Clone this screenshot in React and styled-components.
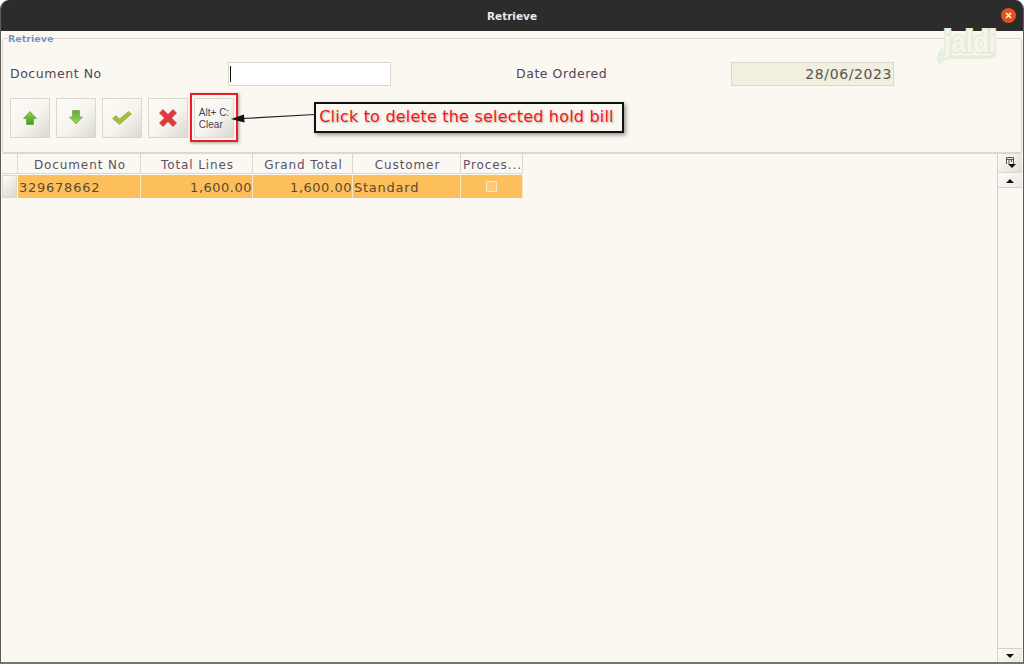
import React from 'react'
import styled, { createGlobalStyle } from 'styled-components'

const Global = createGlobalStyle`
  html, body {
    margin: 0;
    padding: 0;
    background: #fff;
  }
  body {
    font-family: "DejaVu Sans", sans-serif;
    color: #4a4150;
  }
`
const Window = styled.div`
  position: relative;
  width: 1024px;
  height: 664px;
  display: flex;
  flex-direction: column;
  overflow: hidden;
  background: #fbf8f1;
  border-radius: 9px 9px 0 0;
  box-sizing: border-box;
  border-left: 1px solid #5c5c58;
  border-right: 1px solid #5c5c58;
  border-bottom: 2px solid #77756f;
`
const TitleBar = styled.header`
  height: 31px;
  flex: none;
  margin: 0 -1px;
  background: #2c2c2c;
  display: flex;
  align-items: center;
  justify-content: center;
  position: relative;
  color: #e8e8e8;
  font: bold 10.5px "DejaVu Sans", sans-serif;
`
const CloseButton = styled.span`
  position: absolute;
  right: 8px;
  top: 8px;
  width: 15px;
  height: 15px;
  border-radius: 50%;
  background: #e4501e;
  display: flex;
  align-items: center;
  justify-content: center;
`
const Content = styled.main`
  flex: 1;
  display: flex;
  flex-direction: column;
  min-height: 0;
  padding: 2px 1px 0 1px;
`
const Group = styled.fieldset`
  margin: 0;
  padding: 0 0 13px 7px;
  height: 120px;
  flex: none;
  box-sizing: border-box;
  border: 1px solid #ddd8ca;
  border-radius: 2px;
  min-width: 0;
`
const Legend = styled.legend`
  margin-left: -2px;
  padding: 0;
  font-size: 9.5px;
  font-weight: bold;
  line-height: 11px;
  color: #7595c6;
`
const FormRow = styled.div`
  display: grid;
  grid-template-columns: 218px 163px 125px 215px 163px;
  align-items: center;
  height: 24px;
  margin-top: 17px;
`
const Label = styled.label`
  font-size: 12.5px;
  letter-spacing: 0.55px;
  line-height: 26px;
  color: #4f4658;
`
const Input = styled.div`
  height: 24px;
  box-sizing: border-box;
  background: ${p => (p.$readonly ? '#f0efe0' : '#fff')};
  border: 1px solid #ddd8ca;
  font-size: 14px;
  letter-spacing: 0.6px;
  line-height: 22px;
  text-align: right;
  padding: 0 1px;
  color: #5a5450;
  position: relative;
`
const Caret = styled.span`
  position: absolute;
  left: 1px;
  top: 3px;
  width: 1px;
  height: 16px;
  background: #111;
`
const Toolbar = styled.div`
  display: flex;
  gap: 6px;
  margin-top: 13px;
`
const ToolButton = styled.button`
  width: 40px;
  height: 40px;
  padding: ${p => (p.$text ? '2px 0 0' : '0')};
  box-sizing: border-box;
  border: 1px solid #dcd7c8;
  background: linear-gradient(135deg, #fdfcf9 0%, #f6f4ee 55%, #dad8d0 100%);
  display: flex;
  align-items: center;
  justify-content: center;
  font-family: "Liberation Sans", sans-serif;
  font-size: 10px;
  line-height: 12px;
  color: #4a3f55;
  text-align: left;
`
const TableArea = styled.section`
  flex: 1;
  min-height: 0;
  display: flex;
  border-top: 1px solid #ddd8ca;
`
const Table = styled.div`
  flex: 1;
  min-width: 0;
`
const Row = styled.div`
  display: grid;
  grid-template-columns: 16px 123px 112px 100px 108px 62px;
  width: 521px;
`
const HeadCell = styled.div`
  height: 20px;
  box-sizing: border-box;
  border-right: 1px solid #ddd8ca;
  border-bottom: 1px solid #ddd8ca;
  padding-left: 2px;
  font-size: 12px;
  letter-spacing: 0.9px;
  line-height: 22px;
  text-align: center;
  color: #5a5168;
  white-space: nowrap;
  overflow: hidden;
`
const RowHead = styled.div`
  height: 23px;
  margin: 1px 1px 0 0;
  box-sizing: border-box;
  border: 1px solid #ddd8ca;
  background: linear-gradient(135deg, #fdfcf9, #d9d7cf);
`
const Cell = styled.div`
  height: 23px;
  margin-top: 1px;
  box-sizing: border-box;
  background: #fdbf5b;
  border-right: 1px solid #fbe6c2;
  font-size: 13px;
  letter-spacing: ${p => (p.$right ? '0.5px' : '0.75px')};
  line-height: 25px;
  padding: 0 ${p => (p.$right ? '0' : '1px')};
  text-align: ${p => (p.$right ? 'right' : 'left')};
  color: #5c4a30;
  white-space: nowrap;
  display: ${p => (p.$center ? 'flex' : 'block')};
  align-items: center;
  justify-content: center;
`
const Check = styled.span`
  width: 9px;
  height: 9px;
  background: #fdc878;
  border: 1px solid #f3e6cf;
`
const ScrollBar = styled.aside`
  width: 24px;
  flex: none;
  display: flex;
  flex-direction: column;
  border-left: 1px solid #d6d1c3;
`
const ColumnMenu = styled.div`
  height: 19px;
  box-sizing: border-box;
  display: flex;
  align-items: center;
  justify-content: center;
  background: linear-gradient(135deg, #fdfcf9, #e0ded6);
  border-bottom: 1px solid #ddd8ca;
`
const ScrollButton = styled.div`
  height: 14px;
  margin-top: ${p => (p.$top ? '1px' : '0')};
  box-sizing: border-box;
  display: flex;
  align-items: center;
  justify-content: center;
  background: linear-gradient(135deg, #fdfcf9, #ebe9e2);
  border-top: ${p => (p.$top ? 'none' : '1px solid #d6d1c3')};
  border-bottom: ${p => (p.$top ? '1px solid #d6d1c3' : 'none')};
`
const Track = styled.div`
  flex: 1;
`
const Arrow = styled.span`
  width: 0;
  height: 0;
  border-left: 4px solid transparent;
  border-right: 4px solid transparent;
  ${p => (p.$up ? 'border-bottom: 4px solid #111;' : 'border-top: 4px solid #111;')}
`
const Highlight = styled.div`
  position: absolute;
  left: 189px;
  top: 93px;
  width: 48px;
  height: 49px;
  box-sizing: border-box;
  border: 2px solid #ee1c25;
  box-shadow: 1px 1px 3px rgba(0, 0, 0, 0.35);
`
const Callout = styled.div`
  position: absolute;
  left: 313px;
  top: 102px;
  width: 310px;
  height: 31px;
  box-sizing: border-box;
  border: 2px solid #111;
  padding: 0 5px 2px 0;
  background: #fbf8f1;
  box-shadow: 2px 2px 4px rgba(0, 0, 0, 0.4);
  display: flex;
  align-items: center;
  justify-content: center;
  color: #f5141c;
  font-size: 16px;
  letter-spacing: 0.2px;
  text-shadow: 1px 1px 2px rgba(0, 0, 0, 0.3);
  white-space: nowrap;
`
const Pointer = styled.svg`
  position: absolute;
  left: 228px;
  top: 108px;
`
const Watermark = styled.svg`
  position: absolute;
  left: 932px;
  top: 22px;
  pointer-events: none;
`
const LogoText = styled.text`
  font: bold 30px "Liberation Sans", sans-serif;
  fill: #f6f6ea;
  stroke: #e6eddc;
  stroke-width: 4px;
  paint-order: stroke;
`

const columns = ['Document No', 'Total Lines', 'Grand Total', 'Customer', 'Proces...']

const UpIcon = () => (
  <svg width="18" height="18" viewBox="0 0 18 18">
    <defs>
      <linearGradient id="upGreen" x1="0" y1="0" x2="0" y2="1">
        <stop offset="0" stopColor="#8fd64a" />
        <stop offset="1" stopColor="#3f9a28" />
      </linearGradient>
    </defs>
    <path d="M9 2.5 L15.5 9.5 H12.5 V15.5 H5.5 V9.5 H2.5 Z" fill="url(#upGreen)" stroke="#4f9a33" strokeWidth="0.6" />
  </svg>
)
const DownIcon = () => (
  <svg width="18" height="18" viewBox="0 0 18 18">
    <defs>
      <linearGradient id="downGreen" x1="0" y1="0" x2="0" y2="1">
        <stop offset="0" stopColor="#5fa93a" />
        <stop offset="1" stopColor="#9ad95a" />
      </linearGradient>
    </defs>
    <path d="M5.5 1.5 H12.5 V8 H15.5 L9 15 L2.5 8 H5.5 Z" fill="url(#downGreen)" stroke="#5f9f3d" strokeWidth="0.6" />
  </svg>
)
const CheckIcon = () => (
  <svg width="22" height="18" viewBox="0 0 22 18">
    <path d="M1.5 9.5 L5 6.5 L8.5 10 L17.5 2.5 L20.5 5 L8.5 15.5 Z" fill="#a9bb3c" stroke="#8f9f34" strokeWidth="0.6" />
  </svg>
)
const CrossIcon = () => (
  <svg width="20" height="20" viewBox="0 0 20 20">
    <path d="M1.5 5 L5 1.5 L10 6.5 L15 1.5 L18.5 5 L13.5 10 L18.5 15 L15 18.5 L10 13.5 L5 18.5 L1.5 15 L6.5 10 Z" fill="#dc3a3e" stroke="#c22e33" strokeWidth="0.6" />
  </svg>
)
const ColumnIcon = () => (
  <svg width="11" height="12" viewBox="0 0 11 12">
    <path d="M1.5 0.5 H8.5 V7 M1.5 0.5 V7 M1.5 2.5 H8.5 M4 2.5 V7 M6.5 2.5 V5" fill="none" stroke="#555" strokeWidth="1" />
    <path d="M3 7 H11 L7 11 Z" fill="#111" />
  </svg>
)

export default function App() {
  return (
    <Window>
      <Global />
      <TitleBar>
        Retrieve
        <CloseButton>
          <svg width="7" height="7" viewBox="0 0 7 7">
            <path d="M1 1 L6 6 M6 1 L1 6" stroke="#fff" strokeWidth="1.5" />
          </svg>
        </CloseButton>
      </TitleBar>
      <Content>
        <Group>
          <Legend>Retrieve</Legend>
          <FormRow>
            <Label>Document No</Label>
            <Input>
              <Caret />
            </Input>
            <span />
            <Label>Date Ordered</Label>
            <Input $readonly>28/06/2023</Input>
          </FormRow>
          <Toolbar>
            <ToolButton>
              <UpIcon />
            </ToolButton>
            <ToolButton>
              <DownIcon />
            </ToolButton>
            <ToolButton>
              <CheckIcon />
            </ToolButton>
            <ToolButton>
              <CrossIcon />
            </ToolButton>
            <ToolButton $text>
              <span>
                Alt+ C:
                <br />
                Clear
              </span>
            </ToolButton>
          </Toolbar>
        </Group>
        <TableArea>
          <Table>
            <Row>
              <HeadCell />
              {columns.map(c => (
                <HeadCell key={c}>{c}</HeadCell>
              ))}
            </Row>
            <Row>
              <RowHead />
              <Cell>329678662</Cell>
              <Cell $right>1,600.00</Cell>
              <Cell $right>1,600.00</Cell>
              <Cell>Standard</Cell>
              <Cell $center>
                <Check />
              </Cell>
            </Row>
          </Table>
          <ScrollBar>
            <ColumnMenu>
              <ColumnIcon />
            </ColumnMenu>
            <ScrollButton $top>
              <Arrow $up />
            </ScrollButton>
            <Track />
            <ScrollButton>
              <Arrow />
            </ScrollButton>
          </ScrollBar>
        </TableArea>
      </Content>
      <Watermark width="72" height="44" viewBox="0 0 72 44">
        <path d="M62 28 Q62 35 55 35 H16 Q10 35 8 39 Q5 42 6 34 L9 28" fill="none" stroke="#e6eddc" strokeWidth="3.5" strokeLinecap="round" />
        <LogoText x="11" y="30" textLength="52" lengthAdjust="spacingAndGlyphs">
          jaldi
        </LogoText>
      </Watermark>
      <Highlight />
      <Pointer width="90" height="20" viewBox="0 0 90 20">
        <path d="M86 6.5 L14 10.5" stroke="#222" strokeWidth="1.2" />
        <path d="M2 11 L15 6.5 L15.5 14.5 Z" fill="#111" />
      </Pointer>
      <Callout>Click to delete the selected hold bill</Callout>
    </Window>
  )
}
